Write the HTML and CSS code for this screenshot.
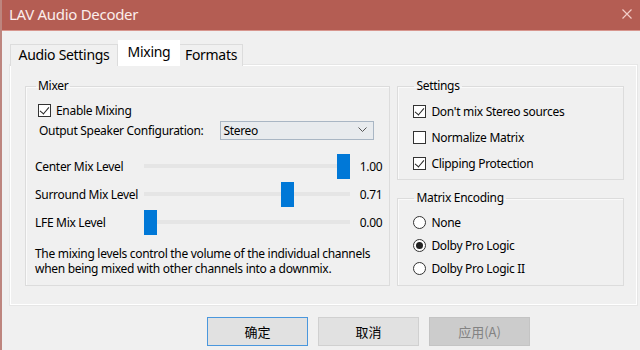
FILE: index.html
```html
<!DOCTYPE html>
<html lang="en">
<head>
  <meta charset="UTF-8" />
  <meta name="viewport" content="width=device-width, initial-scale=1.0"/>
  <title>LAV Audio Decoder</title>
  <link rel="stylesheet" href="styles.css">
</head>
<body>

  <div class="window">
    <div class="titlebar">
      <span class="title">LAV Audio Decoder</span>
      <svg class="close" width="10" height="10" viewBox="0 0 10 10">
        <path d="M0.5 0.5 L9.5 9.5 M9.5 0.5 L0.5 9.5" stroke="#f3cdc8" stroke-width="1.2" fill="none"/>
      </svg>
    </div>

    <div class="client">
      <div class="tabs">
        <div class="tab tab-audio">Audio Settings</div>
        <div class="tab tab-mixing active">Mixing</div>
        <div class="tab tab-formats">Formats</div>
      </div>

      <div class="panel">
        <fieldset class="group mixer">
          <legend>Mixer</legend>

          <div class="option enable-row">
            <span class="box checked"></span>
            <span>Enable Mixing</span>
          </div>

          <div class="speaker-row">
            <span>Output Speaker Configuration:</span>
            <div class="select">
              <span>Stereo</span>
              <svg width="9" height="6" viewBox="0 0 9 6">
                <path d="M0.5 0.5 L4.5 4.5 L8.5 0.5" stroke="#555" stroke-width="1" fill="none"/>
              </svg>
            </div>
          </div>

          <div class="sliders">
            <span class="slider-label">Center Mix Level</span>
            <div class="track"><div class="thumb" style="--v:1"></div></div>
            <span class="slider-value">1.00</span>

            <span class="slider-label">Surround Mix Level</span>
            <div class="track"><div class="thumb" style="--v:0.71"></div></div>
            <span class="slider-value">0.71</span>

            <span class="slider-label">LFE Mix Level</span>
            <div class="track"><div class="thumb" style="--v:0"></div></div>
            <span class="slider-value">0.00</span>
          </div>

          <p class="note">The mixing levels control the volume of the individual channels when being mixed with other channels into a downmix.</p>
        </fieldset>

        <div class="side">
          <fieldset class="group settings">
            <legend>Settings</legend>
            <div class="option"><span class="box checked"></span><span>Don't mix Stereo sources</span></div>
            <div class="option"><span class="box"></span><span>Normalize Matrix</span></div>
            <div class="option"><span class="box checked"></span><span>Clipping Protection</span></div>
          </fieldset>

          <fieldset class="group matrix">
            <legend>Matrix Encoding</legend>
            <div class="option radio-row"><span class="radio"></span><span>None</span></div>
            <div class="option radio-row"><span class="radio selected"></span><span>Dolby Pro Logic</span></div>
            <div class="option radio-row"><span class="radio"></span><span>Dolby Pro Logic II</span></div>
          </fieldset>
        </div>
      </div>

      <div class="buttons">
        <button class="btn default">确定</button>
        <button class="btn">取消</button>
        <button class="btn" disabled>应用(A)</button>
      </div>
    </div>
  </div>

</body>
</html>
```

FILE: styles.css
```css
body {
  margin: 0;
  font-family: "Noto Sans", "Noto Sans CJK SC", sans-serif;
  font-size: 12px;
  letter-spacing: -0.3px;
  color: #000;
  background: #f0f0f0;
}



.window {
  width: 640px;
  height: 350px;
  border-left: 2px solid #bd857e;
  box-sizing: border-box;
  background: #f0f0f0;
  overflow: hidden;
}




.titlebar {
  height: 28px;
  background: #b45d53;
  border-bottom: 1px solid #d7968e;
  display: flex;
  align-items: center;
  justify-content: space-between;
  padding: 0 8px 2px 7px;
}

.title {
  color: #fbeeec;
  font-size: 15px;
}




.client {
  padding: 9px 0 0 8px;
}




.tabs {
  display: flex;
  align-items: flex-end;
  height: 26px;
  position: relative;
  z-index: 1;
  margin-bottom: -1px;
}

.tab {
  height: 22px;
  box-sizing: border-box;
  border: 1px solid #dcdcdc;
  border-bottom: none;
  font-size: 14px;
  line-height: 19px;
  text-align: center;
  background: #f0f0f0;
}

.tab-audio {
  width: 108px;
}

.tab-mixing {
  width: 62px;
}

.tab-formats {
  width: 63px;
  border-left: none;
}

.tab.active {
  height: 26px;
  background: #fff;
  border-color: #fff;
  line-height: 22px;
}




.panel {
  width: 627px;
  height: 240px;
  box-sizing: border-box;
  border: 1px solid #fff;
  outline: 1px solid #e6e6e6;
  display: flex;
  gap: 7px;
  padding: 12px 12px 0 14px;
}




.group {
  margin: 0;
  border: 1px solid #dcdcdc;
  box-shadow: inset 1px 1px 0 #fafafa;
  min-width: 0;
  box-sizing: border-box;
}

.group legend {
  padding: 0 2px;
  margin-left: 1px;
  line-height: 16px;
}




.mixer {
  width: 366px;
  height: 208px;
  padding: 6px 7px 0 9px;
}

.side {
  display: flex;
  flex-direction: column;
  gap: 10px;
  width: 227px;
}

.settings {
  height: 102px;
  padding: 4px 6px 0 15px;
}

.matrix {
  height: 96px;
  padding: 5px 6px 0 15px;
}




.option {
  display: flex;
  align-items: center;
  gap: 5px;
  height: 26px;
}

.enable-row {
  height: 20px;
  margin-left: 3px;
}

.radio-row {
  height: 23px;
}




.box {
  width: 13px;
  height: 13px;
  box-sizing: border-box;
  border: 1px solid #333;
  background: #fff;
  position: relative;
  flex: none;
}

.box.checked::after {
  content: "";
  position: absolute;
  left: 3px;
  top: 0px;
  width: 4px;
  height: 8px;
  border-right: 1px solid #222;
  border-bottom: 1px solid #222;
  transform: rotate(40deg);
}

.radio {
  width: 13px;
  height: 13px;
  box-sizing: border-box;
  border: 1px solid #333;
  border-radius: 50%;
  background: #fff;
  flex: none;
  display: flex;
  align-items: center;
  justify-content: center;
}

.radio.selected::after {
  content: "";
  width: 7px;
  height: 7px;
  border-radius: 50%;
  background: #222;
}




.speaker-row {
  display: flex;
  align-items: center;
  justify-content: space-between;
  height: 20px;
  margin-left: 4px;
  margin-right: 8px;
}

.select {
  width: 154px;
  height: 19px;
  box-sizing: border-box;
  border: 1px solid #a9b6c4;
  background: #e8ebee;
  display: flex;
  align-items: center;
  justify-content: space-between;
  padding: 0 6px 0 2px;
}




.sliders {
  display: grid;
  grid-template-columns: 109px 206px 1fr;
  grid-auto-rows: 28px;
  align-items: center;
  margin-top: 12px;
}

.slider-value {
  text-align: right;
}

.track {
  height: 4px;
  background: #e5e5e5;
  position: relative;
}

.thumb {
  position: absolute;
  top: -10px;
  left: calc((100% - 13px) * var(--v));
  width: 13px;
  height: 25px;
  background: #0078d7;
}




.note {
  margin: 11px 0 0 0;
  line-height: 14.5px;
}




.buttons {
  display: flex;
  gap: 10px;
  margin-top: 12px;
  padding-left: 197px;
}

.btn {
  width: 101px;
  height: 29px;
  font-family: "Noto Sans CJK SC", sans-serif;
  font-size: 13px;
  letter-spacing: 0;
  background: #e1e1e1;
  border: 1px solid #d0d0d0;
  color: #000;
  padding: 0;
}

.btn.default {
  border-color: #4a97dd;
}

.btn:disabled {
  background: #cccccc;
  border-color: #c4c4c4;
  color: #838383;
}
```
